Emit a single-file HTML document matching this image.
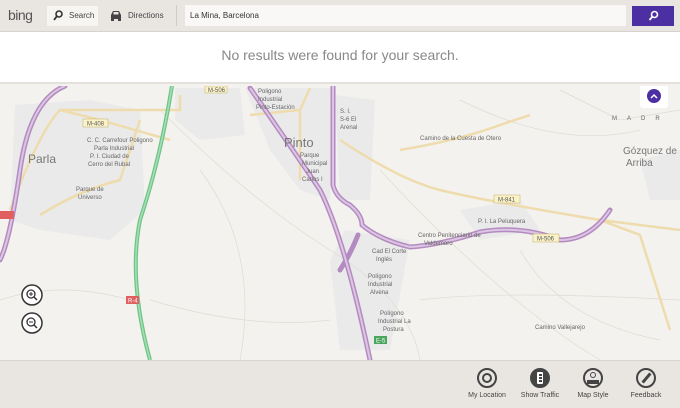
<!DOCTYPE html>
<html><head><meta charset="utf-8"><style>
*{margin:0;padding:0;box-sizing:border-box}
body{width:680px;height:408px;overflow:hidden;font-family:"Liberation Sans",sans-serif;background:#f4f2ee;position:relative}
.top{position:absolute;left:0;top:0;width:680px;height:32px;background:#e9e6e2;border-bottom:1px solid #d6d3cf}
.msg{position:absolute;left:0;top:32px;width:680px;height:52px;background:#fff;border-bottom:2px solid #e4e1dd;text-align:center;font-size:14px;color:#888;line-height:46px}
.bot{position:absolute;left:0;top:360px;width:680px;height:48px;background:#e9e6e2;border-top:1px solid #d8d5d1}
.btn{position:absolute;top:7px;width:60px;text-align:center;font-size:7px;color:#444}
.btn .c{width:20px;height:20px;border-radius:50%;margin:0 auto 4px;border:2px solid #444;position:relative}
</style></head><body>
<div class="top">
 <div style="position:absolute;left:8px;top:7px;font-size:14px;color:#555;letter-spacing:-0.5px">bing</div>
 <div style="position:absolute;left:47px;top:6px;width:51px;height:20px;background:#f7f5f2"></div>
 <svg style="position:absolute;left:53px;top:10px" width="10" height="11"><circle cx="6" cy="4" r="3" fill="none" stroke="#333" stroke-width="1.6"/><line x1="4" y1="6" x2="1" y2="10" stroke="#333" stroke-width="1.8"/></svg>
 <div style="position:absolute;left:69px;top:11px;font-size:8px;color:#444">Search</div>
 <svg style="position:absolute;left:109px;top:10px" width="14" height="11"><path d="M2 5 L4 1 H10 L12 5 V9 H2Z" fill="#444"/><rect x="2" y="8" width="3" height="3" fill="#444"/><rect x="9" y="8" width="3" height="3" fill="#444"/><rect x="4.5" y="2" width="5" height="2.5" fill="#e9e6e2"/></svg>
 <div style="position:absolute;left:128px;top:11px;font-size:8px;color:#444">Directions</div>
 <div style="position:absolute;left:176px;top:5px;width:1px;height:21px;background:#cfccc8"></div>
 <div style="position:absolute;left:185px;top:5px;width:441px;height:21px;background:#faf8f6"></div>
 <div style="position:absolute;left:190px;top:11px;font-size:8px;color:#333">La Mina, Barcelona</div>
 <div style="position:absolute;left:632px;top:6px;width:42px;height:20px;background:#4b2fa3"></div>
 <svg style="position:absolute;left:648px;top:10px" width="11" height="11"><circle cx="6.5" cy="4.5" r="3" fill="none" stroke="#fff" stroke-width="1.6"/><line x1="4.5" y1="6.5" x2="1.5" y2="10" stroke="#fff" stroke-width="1.8"/></svg>
</div>
<div class="msg">No results were found for your search.</div>
<svg style="position:absolute;left:0;top:86px" width="680" height="274" viewBox="0 86 680 274">
 <rect x="0" y="86" width="680" height="274" fill="#f4f2ee"/>
 <g fill="#ebeaeb">
  <path d="M15 105 L90 100 L140 110 L145 210 L110 240 L40 230 L10 220Z"/>
  <path d="M175 88 L240 88 L245 135 L200 140 L175 120Z"/>
  <path d="M245 88 L335 88 L330 200 L300 190 L270 150Z"/>
  <path d="M335 95 L375 100 L370 200 L340 200Z"/>
  <path d="M345 230 L410 240 L390 350 L340 350 L330 260Z"/>
  <path d="M460 210 L520 200 L540 230 L480 240Z"/>
  <path d="M640 160 L680 150 L680 200 L650 200Z"/>
 </g>
 <g fill="none" stroke="#dfdbd3" stroke-width="0.7">
  <path d="M160 110 Q250 200 330 250 T420 360"/><path d="M200 170 Q260 250 240 360"/><path d="M380 170 Q500 300 600 360"/>
  <path d="M420 300 Q500 290 680 300"/><path d="M150 300 Q250 330 330 320"/><path d="M460 100 Q560 150 640 130"/>
  <path d="M0 300 Q60 280 130 300"/><path d="M520 250 Q560 320 660 340"/><path d="M560 90 L620 120 L680 110"/>
 </g>
 <g fill="none" stroke="#eedcad" stroke-width="2.5">
  <path d="M10 210 Q40 130 60 110 L180 110 L180 95"/><path d="M60 110 L100 120 L170 140"/>
  <path d="M40 215 Q80 190 120 180 L140 120"/><path d="M250 115 L300 110 L310 88"/>
  <path d="M340 140 Q400 180 440 190 T600 220 L680 230"/><path d="M400 150 Q460 140 500 125 L530 115"/>
  <path d="M300 110 L300 180"/><path d="M600 220 L640 235 L670 330"/>
 </g>
 <g fill="none" stroke="#b48bc0" stroke-width="5" stroke-linecap="round">
  <path d="M65 86 Q30 100 20 170 Q10 240 0 260"/>
  <path d="M250 88 Q300 160 320 190 Q345 240 370 360"/>
  <path d="M333 86 L333 185 Q336 198 350 205 Q362 215 362 225 Q380 240 410 247 Q440 245 480 232 Q520 225 560 240 Q590 240 610 210"/>
  <path d="M358 235 Q350 255 340 270"/>
 </g>
 <g fill="none" stroke="#dcc6e3" stroke-width="2">
  <path d="M65 86 Q30 100 20 170 Q10 240 0 260"/>
  <path d="M250 88 Q300 160 320 190 Q345 240 370 360"/>
  <path d="M333 86 L333 185 Q336 198 350 205 Q362 215 362 225 Q380 240 410 247 Q440 245 480 232 Q520 225 560 240 Q590 240 610 210"/>
 </g>
 <path d="M172 86 Q160 160 140 220 Q128 280 150 360" fill="none" stroke="#6cc487" stroke-width="4"/>
 <path d="M172 86 Q160 160 140 220 Q128 280 150 360" fill="none" stroke="#a8dfb7" stroke-width="1.5"/>
 <g font-size="6" fill="#666" font-family="Liberation Sans">
  <text x="28" y="163" font-size="12" fill="#777">Parla</text>
  <text x="284" y="147" font-size="13" fill="#777">Pinto</text>
  <text x="623" y="154" font-size="10" fill="#777">Gózquez de</text>
  <text x="626" y="166" font-size="10" fill="#777">Arriba</text>
  <text x="87" y="142">C. C. Carrefour Poligono</text><text x="94" y="150">Parla  Industrial</text><text x="90" y="158">P. I.  Ciudad de</text><text x="88" y="166">Cerro del Rubal</text>
  <text x="76" y="191">Parque de</text><text x="78" y="199">Universo</text>
  <text x="300" y="157">Parque</text><text x="302" y="165">Municipal</text><text x="306" y="173">Juan</text><text x="302" y="181">Carlos I</text>
  <text x="258" y="93">Poligono</text><text x="258" y="101">Industrial</text><text x="256" y="109">Pinto-Estación</text>
  <text x="340" y="113">S. I.</text><text x="340" y="121">S-6 El</text><text x="340" y="129">Arenal</text>
  <text x="418" y="237">Centro Penitenciario de</text><text x="424" y="245">Valdemoro</text>
  <text x="478" y="223">P. I. La Peluquera</text>
  <text x="372" y="253">Cad El Corte</text><text x="376" y="261">Inglés</text>
  <text x="368" y="278">Polígono</text><text x="368" y="286">Industrial</text><text x="370" y="294">Alvena</text>
  <text x="380" y="315">Polígono</text><text x="378" y="323">Industrial La</text><text x="383" y="331">Postura</text>
  <text x="420" y="140">Camino de la Cuesta de Otero</text>
  <text x="535" y="329">Camino Vallejarejo</text>
  <text x="612" y="120" letter-spacing="10">MADR</text>
 </g>
 <rect x="83" y="119" width="25" height="8" fill="#fbf3c8" stroke="#c9b87a" stroke-width="0.6"/><text x="87" y="125.5" font-size="6" fill="#555">M-408</text>
 <rect x="494" y="195" width="26" height="8" fill="#fbf3c8" stroke="#c9b87a" stroke-width="0.6"/><text x="498" y="201.5" font-size="6" fill="#555">M-841</text>
 <rect x="533" y="234" width="26" height="8" fill="#fbf3c8" stroke="#c9b87a" stroke-width="0.6"/><text x="537" y="240.5" font-size="6" fill="#555">M-506</text>
 <rect x="205" y="86" width="22" height="7" fill="#fbf3c8" stroke="#c9b87a" stroke-width="0.6"/><text x="208" y="92" font-size="6" fill="#555">M-506</text>
 <rect x="126" y="296" width="13" height="8" fill="#e06060"/><text x="128" y="302.5" font-size="6" fill="#fff">R-4</text>
 <rect x="0" y="211" width="14" height="8" fill="#e06060"/>
 <rect x="374" y="336" width="13" height="8" fill="#4aa55c"/><text x="376" y="342.5" font-size="6" fill="#fff">E-5</text>
 <circle cx="32" cy="295" r="10" fill="#fff" stroke="#333" stroke-width="1.5"/><circle cx="31" cy="294" r="4" fill="none" stroke="#333" stroke-width="1.3"/><line x1="34" y1="297" x2="37" y2="300" stroke="#333" stroke-width="1.5"/><path d="M29 294h4M31 292v4" stroke="#333"/>
 <circle cx="32" cy="323" r="10" fill="#fff" stroke="#333" stroke-width="1.5"/><circle cx="31" cy="322" r="4" fill="none" stroke="#333" stroke-width="1.3"/><line x1="34" y1="325" x2="37" y2="328" stroke="#333" stroke-width="1.5"/><path d="M29 322h4" stroke="#333"/>
 <rect x="640" y="84" width="28" height="24" rx="3" fill="#fff"/>
 <circle cx="654" cy="96" r="7" fill="#4b2fa3"/><path d="M651 98 L654 95 L657 98" fill="none" stroke="#fff" stroke-width="1.5"/>
</svg>
<div class="bot">
 <div class="btn" style="left:457px"><div class="c"><div style="position:absolute;left:3px;top:3px;width:10px;height:10px;border-radius:50%;border:2px solid #444"></div></div>My Location</div>
 <div class="btn" style="left:510px"><div class="c" style="background:#444"><div style="position:absolute;left:5px;top:2px;width:6px;height:12px;background:#fff;border-radius:1px"></div><div style="position:absolute;left:6.5px;top:3.5px;width:3px;height:9px;background:repeating-linear-gradient(#444 0 2px,#fff 2px 3px)"></div></div>Show Traffic</div>
 <div class="btn" style="left:563px"><div class="c"><div style="position:absolute;left:5px;top:2px;width:6px;height:6px;border-radius:50%;border:1.5px solid #444"></div><div style="position:absolute;left:2px;top:10px;width:12px;height:4px;background:#444"></div></div>Map Style</div>
 <div class="btn" style="left:616px"><div class="c"><div style="position:absolute;left:7px;top:2px;width:3px;height:12px;background:#444;transform:rotate(40deg)"></div></div>Feedback</div>
</div>
</body></html>
